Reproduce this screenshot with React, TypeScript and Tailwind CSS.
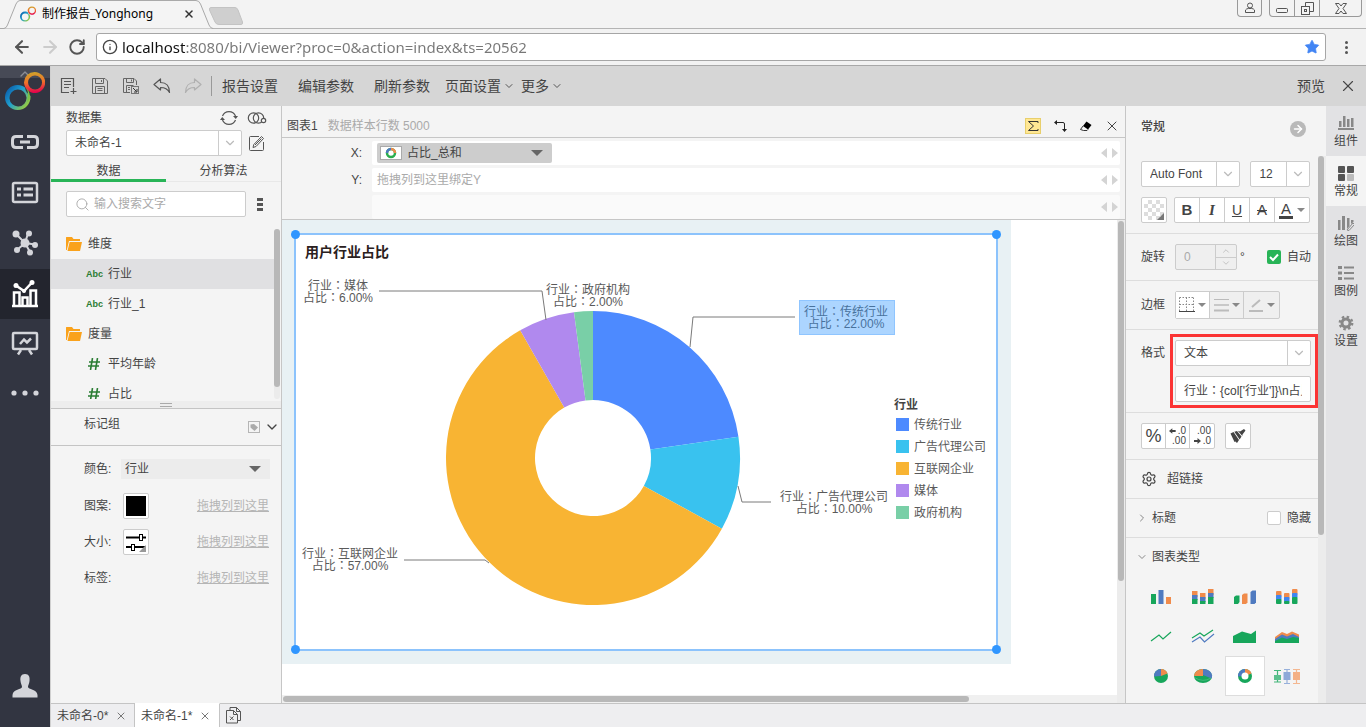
import React from 'react';
import {
  ArrowLeft,
  ArrowRight,
  ChevronDown,
  ChevronRight,
  ChevronUp,
  Info,
  RotateCw,
  Search,
  Settings,
  Star,
  X,
} from 'lucide-react';
import clsx from 'clsx';

interface Slice {
  name: string;
  value: number;
  color: string;
}

const slices: Slice[] = [
  { name: '传统行业', value: 22, color: '#4d8aff' },
  { name: '广告代理公司', value: 10, color: '#39c2ef' },
  { name: '互联网企业', value: 57, color: '#f8b433' },
  { name: '媒体', value: 6, color: '#b089ee' },
  { name: '政府机构', value: 2, color: '#79cfa7' },
];

// label centre and leader line of every slice, in slice order
const labels = [
  { x: 550, y: 81, line: '394,112 397,82 499,82' },
  { x: 538, y: 266, line: '442,251 446,267 475,267' },
  { x: 54, y: 323, line: '108,325 189,325 193,328' },
  { x: 42, y: 55, line: '83,56 246,56 250,85' },
  { x: 292, y: 59, line: '' },
];

const CX = 297;
const CY = 223;
const OUTER = 147;
const INNER = 58;

const point = (r: number, angle: number) =>
  `${(CX + r * Math.sin(angle)).toFixed(2)} ${(CY - r * Math.cos(angle)).toFixed(2)}`;

const arc = (from: number, to: number) => {
  const large = to - from > Math.PI ? 1 : 0;
  return `M${point(OUTER, from)} A${OUTER} ${OUTER} 0 ${large} 1 ${point(OUTER, to)} L${point(INNER, to)} A${INNER} ${INNER} 0 ${large} 0 ${point(INNER, from)} Z`;
};

const Colon = () => <tspan fontFamily="Noto Sans CJK JP">：</tspan>;

const DonutChart = () => {
  const total = slices.reduce((sum, s) => sum + s.value, 0);
  let angle = 0;

  return (
    <svg viewBox="0 0 700 414" className="block w-full" role="img" aria-label="用户行业占比">
      {slices.map((s) => {
        const from = angle;
        angle += (s.value / total) * Math.PI * 2;
        return <path key={s.name} d={arc(from, angle)} fill={s.color} />;
      })}
      <text x="9" y="22" fontSize="14" fontWeight="bold" fill="#2a2020">用户行业占比</text>
      {slices.map((s, i) => (
        <g key={s.name} fontSize="12" fill="#5a5a5a" textAnchor="middle">
          <polyline points={labels[i].line} fill="none" stroke="#7a7a7a" />
          <text x={labels[i].x} y={labels[i].y}>行业<Colon />{s.name}</text>
          <text x={labels[i].x} y={labels[i].y + 12}>占比<Colon />{s.value.toFixed(2)}%</text>
        </g>
      ))}
      <rect x="503.5" y="65.5" width="95" height="34" fill="#3096ff" fillOpacity="0.4" stroke="#8fc5ff" />
      <text x="598" y="174" fontSize="12" fontWeight="bold" fill="#444">行业</text>
      {slices.map((s, i) => (
        <g key={s.name}>
          <rect x="600" y={183 + i * 22} width="13" height="13" fill={s.color} />
          <text x="618" y={194 + i * 22} fontSize="12" fill="#5a5a5a">{s.name}</text>
        </g>
      ))}
    </svg>
  );
};

const Logo: React.FC<{ className: string }> = ({ className }) => (
  <svg viewBox="0 0 40 40" className={className} fill="none">
    <defs>
      <linearGradient id="ringA" x1="0" y1="0.2" x2="0.9" y2="0.9">
        <stop offset="0" stopColor="#0a5cab" />
        <stop offset="0.45" stopColor="#1fa0cf" />
        <stop offset="1" stopColor="#a6d02f" />
      </linearGradient>
      <linearGradient id="ringB" x1="0.3" y1="0" x2="0.4" y2="1">
        <stop offset="0" stopColor="#cda52a" />
        <stop offset="0.5" stopColor="#f0702a" />
        <stop offset="1" stopColor="#e3004c" />
      </linearGradient>
    </defs>
    <path fillRule="evenodd" fill="url(#ringB)" d="M29.500 1a10.500 10.500 0 1 1-3 20.500c-3-1-7-4-7.500-10A10.500 10.500 0 0 1 29.500 1Zm.5 3.500a7 7 0 1 0 .1 14a7 7 0 0 0-.1-14Z" />
    <path fillRule="evenodd" fill="url(#ringA)" d="M12.500 14C16 14 18 15 20 16.500C20.500 20 22 22.500 25.500 25C26 32 21 39 12.500 39A12.500 12.500 0 1 1 12.500 14Zm0 4.500a8.500 8.500 0 1 0 1 17a8.500 8.500 0 0 0-1-17Z" />
    <path fill="#7cc243" d="M21 17C23 20 24 23 22 31C26 29 26 21 21 17Z" />
  </svg>
);

const BrowserChrome = () => (
  <header className="shrink-0 border-b border-[#a8a8a8] bg-[#f3f3f3] text-black">
    <div className="relative flex h-[29px] justify-between border-b border-[#b4b4b4]">
      <svg className="absolute top-0 left-0 h-[29px] w-[250px]" viewBox="0 0 250 29" fill="none">
        <path d="M0 29V28.500H4Q6.500 28 7.500 25L16 4Q17.500.5 20 .5H196Q199 .5 200.500 4L209 25Q210.500 28.500 213 28.500V29Z" fill="#f4f4f4" stroke="#a9a9a9" />
        <path d="M211 7.500H235Q237 7.500 238 10L242.500 22Q243 24.500 241 24.500H219Q216 24.500 215 22L209.500 10Q209 7.500 211 7.500Z" fill="#cfcfcf" stroke="#c3c3c3" />
      </svg>
      <div className="relative flex items-center gap-1 pl-5">
        <Logo className="size-4" />
        <span className="w-[139px] pl-[2px] font-['Noto_Sans','Noto_Sans_CJK_SC',sans-serif] text-xs whitespace-nowrap">制作报告_Yonghong</span>
        <button aria-label="关闭标签页"><X className="size-3 stroke-[#333]" strokeWidth={3} /></button>
      </div>
      <div className="flex gap-[7px] pr-1">
        <button aria-label="用户" className="flex h-[17px] w-[25px] items-center justify-center rounded-b border border-t-0 border-[#999]">
          <svg viewBox="0 0 12 12" className="size-3" fill="none" stroke="#555"><circle cx="6" cy="3.500" r="2.500" /><path d="M1.500 10.500V8Q2.500 6.500 4.500 6.500H7.500Q9.500 6.500 10.500 8V10.500Z" /></svg>
        </button>
        <div className="flex h-[17px] divide-x divide-[#999] rounded-b border border-t-0 border-[#999]">
          <button aria-label="最小化" className="flex w-[25px] items-center justify-center pt-[4px]">
            <svg viewBox="0 0 12 5" className="h-[5px] w-3" fill="none" stroke="#555"><rect x=".5" y=".5" width="11" height="4" rx="1" /></svg>
          </button>
          <button aria-label="还原" className="flex w-[25px] items-center justify-center">
            <svg viewBox="0 0 13 13" className="size-[13px]" fill="none" stroke="#555"><path d="M4.500 4V.5H12.500V9.500H9" /><rect x=".5" y="4.500" width="8" height="8" /><rect x="3.500" y="7.500" width="2" height="2" /></svg>
          </button>
          <button aria-label="关闭" className="flex w-[41px] items-center justify-center">
            <svg viewBox="0 0 12 11" className="h-[11px] w-3" fill="none" stroke="#555"><path d="M.5.5H4L6 3L8 .5H11.500L8 5.500L11.500 10.500H8L6 8L4 10.500H.5L4 5.500Z" /></svg>
          </button>
        </div>
      </div>
    </div>
    <div className="flex h-9 items-center bg-[#f2f2f2] pl-3">
      <button aria-label="后退" className="mr-2"><ArrowLeft className="size-5 stroke-[#555]" strokeWidth={2.5} /></button>
      <button aria-label="前进" className="mr-2"><ArrowRight className="size-5 stroke-[#ccc]" strokeWidth={2.5} /></button>
      <button aria-label="刷新" className="mr-[10px]"><RotateCw className="size-[18px] stroke-[#555]" strokeWidth={2.5} /></button>
      <div className="flex h-7 flex-1 items-center rounded-[3px] border border-[#a6a6a6] bg-white px-[5px]">
        <Info className="size-4 stroke-[#444]" />
        <input
          aria-label="地址"
          readOnly
          defaultValue="localhost:8080/bi/Viewer?proc=0&action=index&ts=20562"
          className="ml-1 h-6 flex-1 bg-[linear-gradient(90deg,#111_64px,#777_64px)] bg-clip-text font-['Noto_Sans',sans-serif] text-[15px] text-transparent outline-none"
        />
        <Star className="size-4 fill-[#4285f4] stroke-[#4285f4]" strokeWidth={1} />
      </div>
      <button aria-label="菜单" className="flex w-10 flex-col items-center gap-[2px]">
        <i className="size-[3px] rounded-full bg-[#555]" />
        <i className="size-[3px] rounded-full bg-[#555]" />
        <i className="size-[3px] rounded-full bg-[#555]" />
      </button>
    </div>
  </header>
);

const railIcons = [
  {
    name: '连接',
    art: <path d="M12 3.500H5Q1.500 3.500 1.500 7V11Q1.500 14.500 5 14.500H12M16 3.500H23Q26.500 3.500 26.500 7V11Q26.500 14.500 23 14.500H16M9 9H19" transform="translate(0 3)" strokeWidth="3" />,
  },
  {
    name: '数据集',
    art: <g strokeWidth="2.500"><rect x="2" y="3" width="24" height="19" rx="1.500" /><path d="M6 9H10M12.500 9H22M6 15H10M12.500 15H22" strokeWidth="3" /></g>,
  },
  {
    name: '节点',
    art: <g fill="currentColor"><path d="M14 13L5 4M14 13L17 3.500M14 13L24 14.500M14 13L6 20M14 13L19 22" strokeWidth="2" /><g stroke="none"><circle cx="14" cy="13" r="4.500" /><circle cx="5" cy="4" r="3.500" /><circle cx="18" cy="3.500" r="3" /><circle cx="24" cy="15" r="3" /><circle cx="6" cy="20" r="3" /><circle cx="19" cy="22.500" r="3" /></g></g>,
  },
  {
    name: '报告',
    art: <g strokeWidth="2"><path d="M1 26H27" strokeWidth="2.500" /><path d="M3 26V12.500H8.500V26M11.500 26V17.500H16.500V26M19.500 26V10.500H25V26" strokeWidth="2.500" /><path d="M5 5.500L13 11L21 2.500" strokeWidth="2.500" /><g fill="currentColor" stroke="none"><circle cx="5" cy="5.500" r="2.500" /><circle cx="13" cy="11" r="2" /><circle cx="21" cy="2.500" r="2.500" /></g></g>,
  },
  {
    name: '查看',
    art: <g strokeWidth="2.500"><rect x="2" y="3" width="24" height="16" rx="1" /><path d="M9 14L13 9.500L16 12.500L20 8.500M10 20L7 24.500M18 20L21 24.500" /></g>,
  },
  {
    name: '更多',
    art: <g fill="currentColor" stroke="none"><circle cx="3" cy="13" r="2.600" /><circle cx="14" cy="13" r="2.600" /><circle cx="25" cy="13" r="2.600" /></g>,
  },
];

const Rail = () => (
  <nav className="flex w-[50px] shrink-0 flex-col items-center bg-[#323541]">
    <div className="flex h-[53px] w-full flex-col items-center">
      <button aria-label="收起" className="flex h-3 w-full justify-center bg-[#474a56]">
        <ChevronUp className="size-4 stroke-[#8b8d96]" />
      </button>
      <Logo className="-mt-[7px] size-10" />
    </div>
    {railIcons.map((item) => (
      <button
        key={item.name}
        aria-label={item.name}
        className={clsx(
          'flex h-[50px] w-full shrink-0 items-center justify-center',
          item.name === '报告' ? 'bg-[#23252e] text-white' : 'text-[#d4d5da]'
        )}
      >
        <svg viewBox="0 0 28 28" className="size-7" fill="none" stroke="currentColor">{item.art}</svg>
      </button>
    ))}
    <button aria-label="个人" className="mt-auto mb-[29px] text-[#d4d5da]">
      <svg viewBox="0 0 26 24" className="h-6 w-[26px]" fill="currentColor"><path d="M13 0C17 0 18 3 17.500 7C17.200 10 16 11 16 13C16 15.500 25 15 25.500 21V23.500H.5V21C1 15 10 15.500 10 13C10 11 8.800 10 8.500 7C8 3 9 0 13 0Z" /></svg>
    </button>
  </nav>
);

const Toolbar = () => (
  <div className="flex h-10 shrink-0 items-center bg-[#d6d6d6] pr-[9px] pl-[9px] text-sm text-[#444]">
    <div className="flex items-center gap-[13px]">
      <button aria-label="新建">
        <svg viewBox="0 0 18 18" className="size-[18px]" fill="none" stroke="#555"><path d="M9 15.500H1.500V1.500H13.500V10M4 4.500H11M4 7.500H11M4 10.500H9M13.500 11V17M10.500 14.500H16.500" strokeWidth="1.200" /></svg>
      </button>
      <button aria-label="保存">
        <svg viewBox="0 0 18 18" className="size-[18px]" fill="none" stroke="#666"><path d="M1.500 1.500H14L16.500 4V16.500H1.500ZM4.500 1.500V6.500H12.500V1.500M10.500 3V5M4.500 16.500V9.500H13.500V16.500M6.500 11.500H11.500M6.500 13.500H11.500" /></svg>
      </button>
      <button aria-label="另存为">
        <svg viewBox="0 0 18 18" className="size-[18px]" fill="none" stroke="#666"><path d="M8 15.500H1.500V1.500H12L14.500 4V8M4.500 1.500V5.500H11.500V1.500M9.500 2.500V4.500M4.500 15.500V8.500H11.500M6 10.500H8M6 12.500H8" /><rect x="9.500" y="9.500" width="7" height="7" fill="#d6d6d6" stroke="#777" /><path d="M11 11L14.500 14.500M15 12V15H12" stroke="#333" /></svg>
      </button>
      <button aria-label="撤销">
        <svg viewBox="0 0 18 18" className="size-[18px]" fill="none" stroke="#555" strokeLinejoin="round"><path d="M1 7.500L7.500 2V5.500C13 5.500 16.500 9 16.500 15.500C14.500 11.500 12 10.500 7.500 10.500V13Z" strokeWidth="1.200" /></svg>
      </button>
      <button aria-label="重做">
        <svg viewBox="0 0 18 18" className="size-[18px]" fill="none" stroke="#b0b0b0" strokeLinejoin="round"><path d="M17 7.500L10.500 2V5.500C5 5.500 1.500 9 1.500 15.500C3.500 11.500 6 10.500 10.500 10.500V13Z" strokeWidth="1.200" /></svg>
      </button>
    </div>
    <i className="mr-[10px] ml-[9px] h-5 w-px bg-[#999]" />
    <div className="flex items-center gap-5">
      <button>报告设置</button>
      <button>编辑参数</button>
      <button>刷新参数</button>
    </div>
    <button className="ml-[15px] flex items-center gap-[2px]">页面设置<ChevronDown className="size-3 stroke-[#555]" /></button>
    <button className="ml-[6px] flex items-center gap-[2px]">更多<ChevronDown className="size-3 stroke-[#555]" /></button>
    <button className="mr-[14px] ml-auto">预览</button>
    <button aria-label="关闭"><X className="size-[18px] stroke-[#444]" strokeWidth={1.5} /></button>
  </div>
);

interface DropDownProps {
  id: string;
  label: string;
  value: string;
  className: string;
}

const DropDown: React.FC<DropDownProps> = ({ id, label, value, className }) => (
  <div className={clsx('flex h-[26px] rounded-[2px] border border-[#ccc] bg-white', className)}>
    <select id={id} aria-label={label} className="min-w-0 flex-1 appearance-none pl-2 outline-none">
      <option>{value}</option>
    </select>
    <span className="flex w-[23px] shrink-0 items-center justify-center border-l border-[#ccc]">
      <ChevronDown className="size-[14px] stroke-[#bbb]" />
    </span>
  </div>
);

const Triangle: React.FC<{ className?: string }> = ({ className }) => (
  <svg viewBox="0 0 12 6" className={clsx('shrink-0', className)} fill="currentColor"><path d="M0 0H12L6 6Z" /></svg>
);

const fields = [
  { name: '维度', type: 'folder' },
  { name: '行业', type: 'text' },
  { name: '行业_1', type: 'text' },
  { name: '度量', type: 'folder' },
  { name: '平均年龄', type: 'number' },
  { name: '占比', type: 'number' },
];

const FieldTree = () => (
  <div className="flex h-[172px] shrink-0 overflow-hidden">
    <ul className="h-[170px] flex-1 overflow-hidden">
      {fields.map((f) => (
        <li
          key={f.name}
          className={clsx(
            'flex h-[30px] items-center',
            f.type === 'folder' ? 'pl-[15px]' : 'pl-[35px]',
            f.name === '行业' && 'bg-[#e0e0e2]'
          )}
        >
          {f.type === 'folder' && (
            <svg viewBox="0 0 16 14" className="mr-[6px] h-[14px] w-4" fill="#faa21b"><path d="M0 13V.5Q0 0 .5 0H6L7.500 2H14V4H3L.8 13Z" /><path d="M3.600 5H16L14 14H1.500Z" /></svg>
          )}
          {f.type === 'text' && <span className="w-[22px] text-[9px] font-bold text-[#2a7d33]">Abc</span>}
          {f.type === 'number' && (
            <svg viewBox="0 0 12 12" className="mr-2 ml-[2px] size-3" fill="none" stroke="#2a7d33" strokeWidth="1.600"><path d="M4.500 0L2.500 12M9.500 0L7.500 12M1 4H12M0 8H11" /></svg>
          )}
          {f.name}
        </li>
      ))}
    </ul>
    <div className="mr-[1px] h-[170px] w-[6px] rounded-full bg-[#ebebeb]">
      <div className="h-[158px] rounded-full bg-[#b8b8b8]" />
    </div>
  </div>
);

const MarkRow: React.FC<{ label: string; children?: React.ReactNode }> = ({ label, children }) => (
  <div className="flex h-9 items-center pr-3 pl-[33px]">
    <span className="w-[39px]">{label}:</span>
    {children}
    <button className="ml-auto text-[#b5b5b5] underline">拖拽列到这里</button>
  </div>
);

const DataPanel = () => (
  <aside className="flex w-[231px] shrink-0 flex-col border-r border-[#c6c6c6]">
    <div className="flex h-6 items-center gap-[9px] pr-[14px] pl-[15px]">
      <span className="mr-auto">数据集</span>
      <button aria-label="刷新数据">
        <svg viewBox="0 0 18 16" className="h-4 w-[18px]" fill="none" stroke="#555" strokeWidth="1.200"><path d="M2.500 6A7 7 0 0 1 15.500 6M15.500 10A7 7 0 0 1 2.500 10" /><path d="M13 6H18L15.800 9ZM5 10H0L2.200 7Z" fill="#555" stroke="none" /></svg>
      </button>
      <button aria-label="关联">
        <svg viewBox="0 0 20 14" className="h-[14px] w-5" fill="none" stroke="#555" strokeWidth="1.200"><circle cx="6.500" cy="7" r="5.200" /><circle cx="11.500" cy="7" r="5.200" /><circle cx="16.500" cy="9.500" r="2.200" fill="#f4f4f4" /></svg>
      </button>
    </div>
    <div className="flex items-center gap-[6px] pr-4 pl-[15px]">
      <DropDown id="dataset" label="数据集" value="未命名-1" className="flex-1" />
      <button aria-label="编辑">
        <svg viewBox="0 0 17 17" className="size-[17px]" fill="none" stroke="#555"><path d="M11 1.500H2.500Q1.500 1.500 1.500 2.500V14.500Q1.500 15.500 2.500 15.500H14.500Q15.500 15.500 15.500 14.500V7M5 12.500L5.800 9.500L13.500 1.500L15.500 3.500L8 11.500ZM7 10L13.500 3.500" /></svg>
      </button>
    </div>
    <div className="mt-1 flex h-[22px] text-center">
      <button className="flex-1 border-b-3 border-[#28b457] pt-[2px]">数据</button>
      <button className="flex-1 border-b border-[#e8e8e8]">分析算法</button>
    </div>
    <div className="mt-[9px] mb-3 flex items-center gap-[11px] pl-[15px]">
      <div className="flex h-[26px] w-[180px] items-center rounded-[2px] border border-[#ccc] bg-white pl-2">
        <Search className="size-[15px] stroke-[#aaa]" strokeWidth={1.5} />
        <input id="search" aria-label="搜索" placeholder="输入搜索文字" className="ml-1 min-w-0 flex-1 outline-none placeholder:text-[#aaa]" />
      </div>
      <button aria-label="列表" className="flex flex-col gap-[2px]">
        <i className="h-[3px] w-[6px] bg-[#555]" />
        <i className="h-[3px] w-[6px] bg-[#555]" />
        <i className="h-[3px] w-[6px] bg-[#555]" />
      </button>
    </div>
    <FieldTree />
    <div className="flex h-2 shrink-0 items-center justify-center border-b border-[#c4c4c4] bg-[#ededed]">
      <i className="h-[4px] w-3 border-y border-[#aaa]" />
    </div>
    <div className="flex h-[37px] shrink-0 items-center border-b border-[#c4c4c4] pr-[1px] pl-[33px]">
      <span className="mr-auto pb-[6px]">标记组</span>
      <button aria-label="标记" className="mr-1">
        <svg viewBox="0 0 12 12" className="size-3"><rect x=".5" y=".5" width="11" height="11" fill="none" stroke="#b5b5b5" /><path d="M2.500 3.500V6.500L6.500 10L10 6.500L6 3Z" fill="#aaa" /></svg>
      </button>
      <button aria-label="展开"><ChevronDown className="size-4 stroke-[#444]" strokeWidth={2} /></button>
    </div>
    <div className="pt-[4px]">
      <div className="flex h-[38px] items-center pr-[11px] pl-[33px]">
        <label htmlFor="color" className="w-[37px]">颜色:</label>
        <div className="flex h-5 flex-1 items-center bg-[#ececec] pr-[9px]">
          <select id="color" className="flex-1 appearance-none pl-1 outline-none"><option>行业</option></select>
          <Triangle className="h-[6px] w-3 text-[#666]" />
        </div>
      </div>
      <MarkRow label="图案">
        <button aria-label="图案" className="size-[26px] rounded-[2px] border border-[#ccc] bg-white p-[2px]"><i className="block size-5 bg-black" /></button>
      </MarkRow>
      <MarkRow label="大小">
        <button aria-label="大小" className="size-[26px] rounded-[2px] border border-[#ccc] bg-white">
          <svg viewBox="0 0 24 24" className="size-6" fill="none" stroke="#000"><path d="M2 7.500H15M18.500 7.500H22M2 17H7M10 17H22" strokeWidth="2" /><rect x="15.500" y="4.500" width="3" height="6" fill="#fff" /><rect x="7.500" y="14.500" width="3" height="6" fill="#fff" /><path d="M22 15V22H15Z" fill="#999" stroke="none" /></svg>
        </button>
      </MarkRow>
      <MarkRow label="标签" />
    </div>
  </aside>
);

const BindRow: React.FC<{ label: string; children?: React.ReactNode }> = ({ label, children }) => (
  <div className="flex h-[27px] items-end">
    <span className="flex h-6 w-[80px] items-center justify-end">{label}</span>
    <div className={clsx('ml-[10px] flex h-6 flex-1 items-center rounded-[2px] pr-[2px] pl-[5px]', label ? 'bg-white' : 'bg-[#fafafa]')}>
      {children}
      <svg viewBox="0 0 17 10" className="ml-auto h-[10px] w-[17px]" fill="#d4d4d4"><path d="M6 0V10L0 5ZM11 0V10L17 5Z" /></svg>
    </div>
  </div>
);

const ChartArea = () => (
  <main className="flex min-w-0 flex-1 flex-col border-r border-[#c6c6c6]">
    <div className="flex h-8 shrink-0 items-center border-b border-[#c6c6c6] pt-[9px] pr-[5px] pl-[5px]">
      <span>图表1</span>
      <span className="ml-[10px] text-[#aaa]">数据样本行数 5000</span>
      <div className="ml-auto flex items-center gap-[11px]">
        <button aria-label="合计" className="flex size-4 items-center justify-center border border-[#e8cf6c] bg-[#ffe794]">
          <svg viewBox="0 0 12 12" className="size-3" fill="none" stroke="#333"><path d="M11 3V1.500H1.500L6.500 6L1.500 10.500H11V9" /></svg>
        </button>
        <button aria-label="行列互换">
          <svg viewBox="0 0 16 14" className="h-[14px] w-4" fill="none" stroke="#222"><path d="M3 3.500H11Q12.500 3.500 12.500 5V11" /><path d="M2 3.500L5 1V6ZM12.500 13L10 10H15Z" fill="#222" stroke="none" /></svg>
        </button>
        <button aria-label="清除">
          <svg viewBox="0 0 14 12" className="h-3 w-[14px]"><path d="M7.500 1.500L12.500 5L9 9.500L4 6Z" fill="#000" /><path d="M4 6L1.500 9.500L4.500 10.500H8L9 9.500" fill="none" stroke="#333" /></svg>
        </button>
        <button aria-label="关闭"><X className="size-4 stroke-[#444]" strokeWidth={1.5} /></button>
      </div>
    </div>
    <div className="h-[82px] shrink-0 border-b border-[#c6c6c6] pr-[5px]">
      <BindRow label="X:">
        <button className="flex h-5 w-[175px] items-center rounded-[2px] bg-[#cdcdcd] px-[3px]">
          <span className="flex h-[14px] w-[22px] items-center justify-center border border-[#aaa] bg-white">
            <svg viewBox="0 0 12 12" className="size-3" fill="none" strokeWidth="2.500"><circle cx="6" cy="6" r="4" stroke="#2cae4f" /><path d="M6 2A4 4 0 0 1 10 6" stroke="#ef8a4a" /><path d="M2 6A4 4 0 0 1 6 2" stroke="#4f7ac0" /></svg>
          </span>
          <span className="ml-[5px]">占比_总和</span>
          <Triangle className="mr-[6px] ml-auto h-[6px] w-3 text-[#666]" />
        </button>
      </BindRow>
      <BindRow label="Y:"><span className="text-[#aaa]">拖拽列到这里绑定Y</span></BindRow>
      <BindRow label="" />
    </div>
    <div className="flex min-h-0 flex-1 bg-white">
      <div className="flex min-w-0 flex-1 flex-col">
        <div className="w-[729px] bg-[#e8f1f4] py-[13px] pr-[13px] pl-3">
          <div className="relative border-2 border-[#8cc3fc] bg-white">
            <DonutChart />
            <i className="absolute -top-[5px] -left-[5px] size-[9px] rounded-full bg-[#3096ff]" />
            <i className="absolute -top-[5px] -right-[5px] size-[9px] rounded-full bg-[#3096ff]" />
            <i className="absolute -bottom-[5px] -left-[5px] size-[9px] rounded-full bg-[#3096ff]" />
            <i className="absolute -right-[5px] -bottom-[5px] size-[9px] rounded-full bg-[#3096ff]" />
          </div>
        </div>
        <div className="mt-auto h-2 bg-[#f0f0f0] pt-px pl-px">
          <div className="h-[6px] w-[686px] rounded-full bg-[#b8b8b8]" />
        </div>
      </div>
      <div className="w-2 bg-[#ececec] px-px pt-px">
        <div className="h-[360px] rounded-full bg-[#b8b8b8]" />
      </div>
    </div>
  </main>
);

const PieIcon = ({ hole }: { hole?: boolean }) => (
  <g>
    <circle cx="12" cy="12" r="7" fill="#17a65b" />
    <path d="M12 12V5A7 7 0 0 1 18.500 9.500Z" fill="#f08b4b" />
    <path d="M12 12V5A7 7 0 0 0 5 12.500Z" fill="#4f7ac0" />
    {hole && <circle cx="12" cy="12" r="3.500" fill="#fff" />}
  </g>
);

const StackedBars = ({ round }: { round?: boolean }) => (
  <g transform="translate(0 2)">
    {[1, 9, 17].map((x, i) => {
      const top = [5, 7, 3][i];
      const r = round ? 1 : 0;
      return (
        <g key={x}>
          <rect x={x} y={top} width="5.500" height="6" rx={r} fill="#f08b4b" />
          <rect x={x} y={top + 4} width="5.500" height="5" rx={r} fill={round ? '#3f86f0' : '#4f7ac0'} />
          <rect x={x} y={top + 8} width="5.500" height={10 - top} rx={r} fill="#17a65b" />
        </g>
      );
    })}
  </g>
);

const chartTypes = [
  { name: '柱状图', art: <g transform="translate(0 1)"><rect x="2" y="9" width="5" height="10" fill="#17a65b" /><rect x="9.500" y="5" width="5" height="14" fill="#4f7ac0" /><rect x="17" y="12" width="5" height="7" fill="#f08b4b" /></g> },
  { name: '堆积柱状图', art: <StackedBars /> },
  { name: '3D柱状图', art: <g transform="translate(0 2)"><path d="M1 11L3 9.500H6.500V16L5 18H1Z" fill="#17a65b" /><path d="M9 9L11 7.500H14.500V16.500L13 18H9Z" fill="#f08b4b" /><path d="M17.500 6L19.500 4.500H23V16.500L21.500 18H17.500Z" fill="#4f7ac0" /></g> },
  { name: '3D堆积柱状图', art: <StackedBars round /> },
  { name: '线图', art: <path d="M2 17L10 11L14 15L22 8" fill="none" stroke="#17a65b" strokeWidth="1.200" /> },
  { name: '堆积线图', art: <g fill="none" strokeWidth="1.200"><path d="M1 14L9 9L13 12L22 6" stroke="#17a65b" /><path d="M1 18L9 13L13.500 18L23 10" stroke="#4f7ac0" /></g> },
  { name: '面积图', art: <path d="M0 19V12L9 7.500L18 10L23 6.500V19Z" fill="#17a65b" /> },
  { name: '堆积面积图', art: <g transform="translate(0 1)"><path d="M0 12L7 7L12 9L17 6.500L24 9.500V18H0Z" fill="#f08b4b" /><path d="M0 14L7 9.500L12 11.500L18 9L24 12V18H0Z" fill="#4f7ac0" /><path d="M0 16L7 12.500L12 14L18 12L24 13V18H0Z" fill="#17a65b" /></g> },
  { name: '饼图', art: <PieIcon /> },
  { name: '3D饼图', art: <g><ellipse cx="12" cy="12" rx="9" ry="7" fill="#17a65b" /><path d="M12 12V5A9 7 0 0 0 3 12Z" fill="#f08b4b" /><path d="M12 11V5A9 7 0 0 1 20.500 14.500Z" fill="#4f7ac0" /><path d="M3.500 13.500Q12 19 20 14" fill="none" stroke="#5cc78d" strokeWidth=".6" /></g> },
  { name: '环形图', art: <PieIcon hole /> },
  { name: '箱线图', art: <g strokeWidth="1.200" strokeOpacity=".8"><path d="M2.500 6V18M-1 6.500H6M-1 18H6" stroke="#17a65b" /><rect x="-1" y="11" width="7" height="5" fill="#5cc08d" /><path d="M12 5V19M9 5.500H15M9 19.500H15" stroke="#7f9fd4" /><rect x="8.500" y="8" width="7" height="8" fill="#8ea9d8" /><path d="M21.500 5V19M18 5.500H25M18 19.500H25" stroke="#f4a777" /><rect x="18" y="8" width="7" height="8" fill="#f4b085" /></g> },
];

const Caret = () => <Triangle className="h-1 w-2 text-[#888]" />;

const PropertyPanel = () => (
  <aside className="flex w-[200px] shrink-0 flex-col">
    <div className="flex h-[50px] shrink-0 items-start justify-between pt-[13px] pr-5 pl-[15px]">
      <h2 className="font-medium">常规</h2>
      <button aria-label="收起面板" className="mt-[2px] flex size-4 items-center justify-center rounded-full bg-[#b9b9b9]"><ArrowRight className="size-3 stroke-white" strokeWidth={3} /></button>
    </div>
    <div className="flex min-h-0 flex-1">
      <div className="min-w-0 flex-1 overflow-hidden">
        <section className="border-b border-[#ddd] pt-[5px] pr-2 pb-[10px] pl-[15px]">
          <div className="flex gap-[10px]">
            <DropDown id="font" label="字体" value="Auto Font" className="w-[100px]" />
            <DropDown id="size" label="字号" value="12" className="w-[60px]" />
          </div>
          <div className="mt-[10px] flex justify-between">
            <button aria-label="背景" className="size-[26px] rounded-[2px] border border-[#ccc] bg-white">
              <svg viewBox="0 0 24 24" className="size-6">
                {[0, 1, 2, 3, 4].map((r) => [0, 1, 2, 3, 4].map((c) => (r + c) % 2 === 1 && <rect key={`${r}${c}`} x={2 + c * 4} y={2 + r * 4} width="4" height="4" fill="#ddd" />))}
                <path d="M22 15V22H15Z" fill="#777" />
              </svg>
            </button>
            <div className="flex h-[26px] divide-x divide-[#ccc] rounded-[2px] border border-[#ccc] bg-white text-[15px] leading-6">
              <button className="w-[25px] font-bold">B</button>
              <button className="w-[25px] font-['Liberation_Serif',serif] font-bold italic">I</button>
              <button className="w-[25px] text-sm underline">U</button>
              <button className="w-[25px] line-through">A</button>
              <button className="flex w-[34px] items-center justify-center gap-1" aria-label="文字颜色">
                <span className="h-[18px] border-b-3 border-[#444] px-[2px] leading-4">A</span>
                <Caret />
              </button>
            </div>
          </div>
        </section>
        <section className="flex items-center border-b border-[#ddd] py-[10px] pl-[15px]">
          <label htmlFor="rotate" className="w-[34px]">旋转</label>
          <div className="flex h-[26px] w-[62px] rounded-[2px] border border-[#ccc] bg-[#efefef]">
            <input id="rotate" disabled defaultValue="0" className="w-[39px] pl-2 text-[#aaa]" />
            <div className="flex flex-1 flex-col divide-y divide-[#ccc] border-l border-[#ccc]">
              <button aria-label="增加" className="flex flex-1 items-center justify-center"><ChevronUp className="size-[10px] stroke-[#bbb]" /></button>
              <button aria-label="减少" className="flex flex-1 items-center justify-center"><ChevronDown className="size-[10px] stroke-[#bbb]" /></button>
            </div>
          </div>
          <span className="ml-[3px]">°</span>
          <span className="relative mr-[6px] ml-auto size-[14px]">
            <input id="auto" type="checkbox" defaultChecked className="block size-[14px] appearance-none rounded-[2px] bg-[#28b457]" />
            <svg viewBox="0 0 14 14" className="pointer-events-none absolute inset-0 size-[14px]" fill="none" stroke="#fff" strokeWidth="2"><path d="M3 7L6 10L11 4.500" /></svg>
          </span>
          <label htmlFor="auto" className="mr-[7px]">自动</label>
        </section>
        <section className="flex items-center border-b border-[#ddd] py-[10px] pl-[15px]">
          <span className="w-[34px]">边框</span>
          <div className="flex h-7 divide-x divide-[#ccc] rounded-[2px] border border-[#ccc] bg-[#efefef]">
            <button aria-label="边框位置" className="flex w-[34px] items-center justify-center gap-[3px] bg-white">
              <svg viewBox="0 0 16 16" className="size-4" fill="none" stroke="#888"><path d="M.5.5H15.500M.5 7.500H15.500M.5.5V14M7.500.5V14M14.500.5V14" strokeDasharray="1.500 1.500" /><path d="M0 14.500H16" stroke="#444" /></svg>
              <Caret />
            </button>
            <button aria-label="边框样式" className="flex w-[34px] items-center justify-center gap-[3px]">
              <svg viewBox="0 0 16 14" className="h-[14px] w-4" fill="none" stroke="#bbb"><path d="M1 1.500H16" /><path d="M1 7H16" strokeWidth="1.500" /><path d="M1 12.500H16" strokeWidth="2" /></svg>
              <Caret />
            </button>
            <button aria-label="边框颜色" className="flex w-[35px] items-center justify-center gap-[3px]">
              <svg viewBox="0 0 16 14" className="h-[14px] w-4" fill="none" stroke="#bbb" strokeWidth="2"><path d="M4 9L12 2M1 13H15" /></svg>
              <Caret />
            </button>
          </div>
        </section>
        <section className="relative flex border-b border-[#ddd] py-[10px] pr-[7px] pl-[15px]">
          <span className="w-[34px] pt-[5px]">格式</span>
          <div className="flex-1 space-y-[10px]">
            <DropDown id="format" label="格式" value="文本" className="w-full" />
            <div className="h-[26px] rounded-[2px] border border-[#ccc] bg-white px-2">
              <input
                id="pattern"
                aria-label="格式内容"
                defaultValue={"行业：{col['行业']}\\n占比：{col['占比']}"}
                className="h-6 w-full font-['Liberation_Sans','Noto_Sans_CJK_JP',sans-serif] outline-none"
              />
            </div>
          </div>
          <i className="pointer-events-none absolute top-1 right-0 bottom-1 left-[44px] border-3 border-[#fb3434]" />
        </section>
        <section className="flex gap-[10px] border-b border-[#ddd] py-[10px] pl-[15px]">
          <div className="flex h-[26px] divide-x divide-[#ccc] rounded-[2px] border border-[#ccc] bg-white text-[10px] leading-[10px]">
            <button className="w-6 text-lg leading-6">%</button>
            {['减少小数', '增加小数'].map((name, i) => (
              <button key={name} aria-label={name} className="flex w-6 flex-col justify-center px-[3px]">
                <span className="flex w-full items-center justify-end gap-[2px]">
                  {i === 0 && <svg viewBox="0 0 7 6" className="h-[6px] w-[7px]" fill="#444"><path d="M0 3L3.500 0V2H7V4H3.500V6Z" /></svg>}
                  {i === 0 ? '.0' : '.00'}
                </span>
                <span className="flex w-full items-center justify-end gap-[2px]">
                  {i === 1 && <svg viewBox="0 0 7 6" className="h-[6px] w-[7px]" fill="#444"><path d="M7 3L3.500 0V2H0V4H3.500V6Z" /></svg>}
                  {i === 0 ? '.00' : '.0'}
                </span>
              </button>
            ))}
          </div>
          <button aria-label="格式刷" className="flex size-[26px] items-center justify-center rounded-[2px] border border-[#ccc] bg-white">
            <svg viewBox="0 0 16 16" className="size-4" fill="#444"><path d="M.5 5.500L3.500 4L9 12L7 15L5.500 13.500L4.500 14Z" /><path d="M4.300 3.800L7 3L11.500 8.500L9.700 11.500ZM7.800 2.800L10 3.500L14 1L15.500 2.500L12.500 6.500L12.300 8Z" /></svg>
          </button>
        </section>
        <button className="flex h-[39px] w-full items-center gap-[10px] border-b border-[#ddd] pl-[15px]">
          <Settings className="size-4 stroke-[#444]" strokeWidth={1.8} />超链接
        </button>
        <section className="flex h-[39px] items-center border-b border-[#ddd] pl-[10px]">
          <button className="flex items-center gap-1"><ChevronRight className="size-3 stroke-[#888]" />标题</button>
          <input id="hide" type="checkbox" className="mr-[6px] ml-auto size-[14px] appearance-none rounded-[2px] border border-[#ccc] bg-white" />
          <label htmlFor="hide" className="mr-[7px]">隐藏</label>
        </section>
        <section>
          <button className="flex h-[38px] items-center gap-1 pl-[10px]"><ChevronDown className="size-3 stroke-[#888]" />图表类型</button>
          <div className="flex flex-wrap gap-x-[2px] pl-[15px]">
            {chartTypes.map((t) => (
              <button
                key={t.name}
                aria-label={t.name}
                className={clsx('flex size-10 items-center justify-center', t.name === '环形图' && 'border border-[#ddd] bg-white')}
              >
                <svg viewBox="0 0 24 24" className="size-6 overflow-visible">{t.art}</svg>
              </button>
            ))}
          </div>
        </section>
      </div>
      <div className="w-2 bg-[#ececec] pr-[2px]">
        <div className="h-[379px] rounded-full bg-[#b8b8b8]" />
      </div>
    </div>
  </aside>
);

const sideTabs = [
  { name: '组件', art: <path d="M0 13H16V15H0ZM1 6H3.500V12H1ZM5 1H7.500V12H5ZM9 4H11.500V12H9ZM13 3H15.500V12H13Z" /> },
  { name: '常规', art: <g><rect width="7" height="7" x="0" y="1" rx="1" /><rect x="9" y="1" width="7" height="7" rx="1" /><rect y="9" width="7" height="7" rx="1" /><rect x="9" y="9" width="7" height="7" rx="1" fill="#bbb" /></g> },
  { name: '绘图', art: <g><path d="M0 5H2.500V15H0ZM4 1H7V15H4ZM9 3H11.500V11L9 14ZM13 5H15.500V7L13 9Z" /><path d="M9 15L15 8L16.500 9.500L11 15.500Z" fill="none" stroke="#888" /></g> },
  { name: '图例', art: <path d="M0 1H4V4H0ZM0 6.500H4V9.500H0ZM0 12H4V15H0ZM6 1.500H16V3.500H6ZM6 7H16V9H6ZM6 12.500H16V14.500H6Z" /> },
  { name: '设置', art: <g fill="none" stroke="#888"><circle cx="8" cy="8" r="4" strokeWidth="3" /><circle cx="8" cy="8" r="6.200" strokeWidth="2.400" strokeDasharray="2.430 2.430" /></g> },
];

const SideTabs = () => (
  <nav className="w-10 shrink-0 bg-[#e2e2e4]">
    {sideTabs.map((t) => (
      <button
        key={t.name}
        className={clsx('flex h-[50px] w-full flex-col items-center pt-[9px]', t.name === '常规' ? 'bg-[#f4f4f4]' : '')}
      >
        <svg viewBox="0 0 16 16" className="size-4" fill={t.name === '常规' ? '#555' : '#888'}>{t.art}</svg>
        <span className="mt-px leading-[18px]">{t.name}</span>
      </button>
    ))}
  </nav>
);

const BottomTabs = () => (
  <footer className="flex h-6 shrink-0 bg-[#eeeef0]">
    {['未命名-0', '未命名-1'].map((name, i) => (
      <div
        key={name}
        className={clsx(
          'flex items-center border-t border-r border-r-[#c4c4c4] pl-[6px]',
          i === 1 ? 'w-[85px] border-t-white bg-white' : 'w-[84px] border-t-[#c4c4c4]'
        )}
      >
        <button className="flex w-[58px]">{name}<span>*</span></button>
        <button aria-label="关闭"><X className="size-3 stroke-[#777]" strokeWidth={2} /></button>
      </div>
    ))}
    <div className="flex flex-1 items-center border-t border-[#c4c4c4] pl-[6px]">
      <button aria-label="全部文档">
        <svg viewBox="0 0 16 17" className="h-[17px] w-4" fill="none" stroke="#555"><path d="M4 3V.5H10.500L14.500 4.500V13.500H12M10.500.5V4.500H14.500" /><path d="M.5 3.500H7.500L11.500 7.500V16H.5ZM7.500 3.500V7.500H11.500M4 9.500L7.500 13M7.500 9.500L4 13" /></svg>
      </button>
    </div>
  </footer>
);

export default function App() {
  return (
    <div className="flex h-screen min-h-[727px] w-full flex-col overflow-hidden bg-[#f4f4f4] font-['Liberation_Sans','Noto_Sans_CJK_SC',sans-serif] text-xs text-[#444]">
      <BrowserChrome />
      <div className="flex min-h-0 flex-1">
        <Rail />
        <div className="flex min-w-0 flex-1 flex-col border-l border-[#d0d0d0]">
          <Toolbar />
          <div className="flex min-h-0 flex-1">
            <DataPanel />
            <ChartArea />
            <PropertyPanel />
            <SideTabs />
          </div>
          <BottomTabs />
        </div>
      </div>
    </div>
  );
}
